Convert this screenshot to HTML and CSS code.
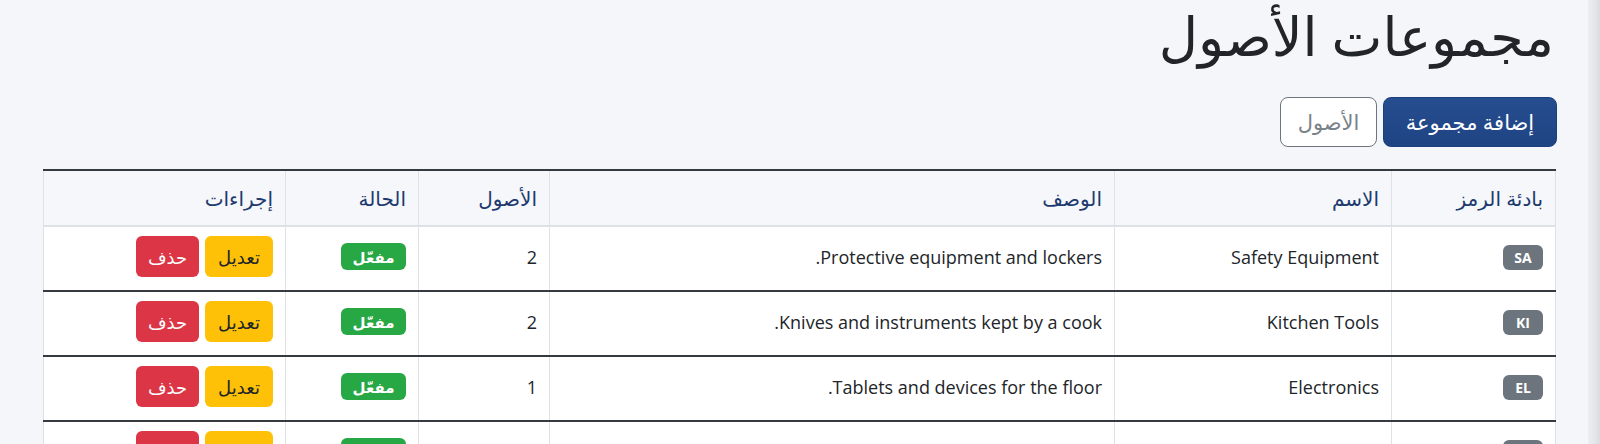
FILE: index.html
```html
<!DOCTYPE html>
<html lang="ar" dir="rtl">
<head>
  <meta charset="UTF-8">
  <meta name="viewport" content="width=device-width, initial-scale=1.0">
  <title>مجموعات الأصول</title>
  <link rel="stylesheet" href="styles.css">
</head>
<body>
  <div class="page">
    <aside class="side-edge"></aside>
    <main class="groups-container">
      <h1 class="groups-title">مجموعات الأصول</h1>
      <div class="groups-toolbar">
        <a class="btn btn-primary">إضافة مجموعة</a>
        <a class="btn btn-outline">الأصول</a>
      </div>
      <table class="groups-table">
        <thead>
          <tr>
            <th class="col-code">بادئة الرمز</th>
            <th class="col-name">الاسم</th>
            <th class="col-desc">الوصف</th>
            <th class="col-count">الأصول</th>
            <th class="col-status">الحالة</th>
            <th class="col-actions">إجراءات</th>
          </tr>
        </thead>
        <tbody>
          <tr>
            <td><span class="code-badge">SA</span></td>
            <td>Safety Equipment</td>
            <td>Protective equipment and lockers.</td>
            <td>2</td>
            <td><span class="status-badge">مفعّل</span></td>
            <td>
              <div class="row-actions">
                <a class="btn-sm btn-edit">تعديل</a>
                <a class="btn-sm btn-delete">حذف</a>
              </div>
            </td>
          </tr>
          <tr>
            <td><span class="code-badge">KI</span></td>
            <td>Kitchen Tools</td>
            <td>Knives and instruments kept by a cook.</td>
            <td>2</td>
            <td><span class="status-badge">مفعّل</span></td>
            <td>
              <div class="row-actions">
                <a class="btn-sm btn-edit">تعديل</a>
                <a class="btn-sm btn-delete">حذف</a>
              </div>
            </td>
          </tr>
          <tr>
            <td><span class="code-badge">EL</span></td>
            <td>Electronics</td>
            <td>Tablets and devices for the floor.</td>
            <td>1</td>
            <td><span class="status-badge">مفعّل</span></td>
            <td>
              <div class="row-actions">
                <a class="btn-sm btn-edit">تعديل</a>
                <a class="btn-sm btn-delete">حذف</a>
              </div>
            </td>
          </tr>
          <tr>
            <td><span class="code-badge">UN</span></td>
            <td>Uniforms</td>
            <td>Clothing issued to staff.</td>
            <td>4</td>
            <td><span class="status-badge">مفعّل</span></td>
            <td>
              <div class="row-actions">
                <a class="btn-sm btn-edit">تعديل</a>
                <a class="btn-sm btn-delete">حذف</a>
              </div>
            </td>
          </tr>
        </tbody>
      </table>
    </main>
  </div>
</body>
</html>
```

FILE: styles.css
```css
*{
  margin: 0;
  padding: 0;
  box-sizing: border-box;
}
body{
  font-family: "Open Sans", "DejaVu Sans", sans-serif;
  background: #f4f6fa;
  color: #212529;
}
.page{
  display: flex;
  min-height: 100vh;
}
.side-edge{
  width: 12px;
  flex-shrink: 0;
  background: linear-gradient(to right, #eceef2, #e3e5ea 60%, #d9dbe0);
}
.groups-container{
  flex: 1;
  padding: 2px 32px 0 44px;
}
.groups-title{
  font-size: 54px;
  font-weight: 400;
  line-height: 66px;
  color: #212529;
  padding-right: 2px;
}
.groups-toolbar{
  display: flex;
  gap: 6px;
  margin: 29px -1px 22px 0;
}
.btn{
  display: inline-flex;
  align-items: center;
  justify-content: center;
  height: 50px;
  padding: 0 14px;
  font-size: 21px;
  border-radius: 8px;
  border: 1px solid transparent;
  cursor: pointer;
}
.btn-primary{
  width: 174px;
  background: linear-gradient(to bottom, #264d8f, #1f4484);
  border-color: #1d3f7b;
  color: #fff;
}
.btn-outline{
  width: 97px;
  background: #fff;
  border-color: #6c757d;
  color: #7a828a;
}
.groups-table{
  width: 100%;
  table-layout: fixed;
  border-collapse: collapse;
  background: #fff;
  border-top: 2px solid #343a40;
}
.groups-table th,
.groups-table td{
  text-align: right;
  vertical-align: middle;
  padding: 0 12px;
  border-left: 1px solid #dee2e6;
  border-right: 1px solid #dee2e6;
}
.groups-table th{
  height: 56px;
  font-size: 20px;
  font-weight: 400;
  color: #1e3a6e;
  background: #f5f7fb;
  border-bottom: 2px solid #dee2e6;
}
.groups-table td{
  height: 65px;
  padding-bottom: 4px;
  font-size: 18px;
  color: #212529;
  border-bottom: 2px solid #343a40;
}
.col-code{ width: 164px; }
.col-name{ width: 277px; }
.col-desc{ width: 565px; }
.col-count{ width: 131px; }
.col-status{ width: 133px; }
.col-actions{ width: 242px; }

.code-badge{
  display: inline-flex;
  align-items: center;
  justify-content: center;
  min-width: 40px;
  height: 25px;
  padding: 0 7px;
  border-radius: 6px;
  background: #6c757d;
  color: #fff;
  font-size: 14px;
  font-weight: 700;
}
.status-badge{
  display: inline-flex;
  align-items: center;
  justify-content: center;
  width: 65px;
  height: 27px;
  border-radius: 6px;
  background: #28a745;
  color: #fff;
  font-size: 15px;
  font-weight: 700;
}
.row-actions{
  display: flex;
  gap: 6px;
}
.btn-sm{
  display: inline-flex;
  align-items: center;
  justify-content: center;
  height: 41px;
  padding: 0 12px;
  font-size: 18px;
  border-radius: 6px;
  cursor: pointer;
}
.btn-edit{
  width: 68px;
  background: #ffc107;
  color: #212529;
}
.btn-delete{
  width: 63px;
  background: #dc3545;
  color: #fff;
}
```
